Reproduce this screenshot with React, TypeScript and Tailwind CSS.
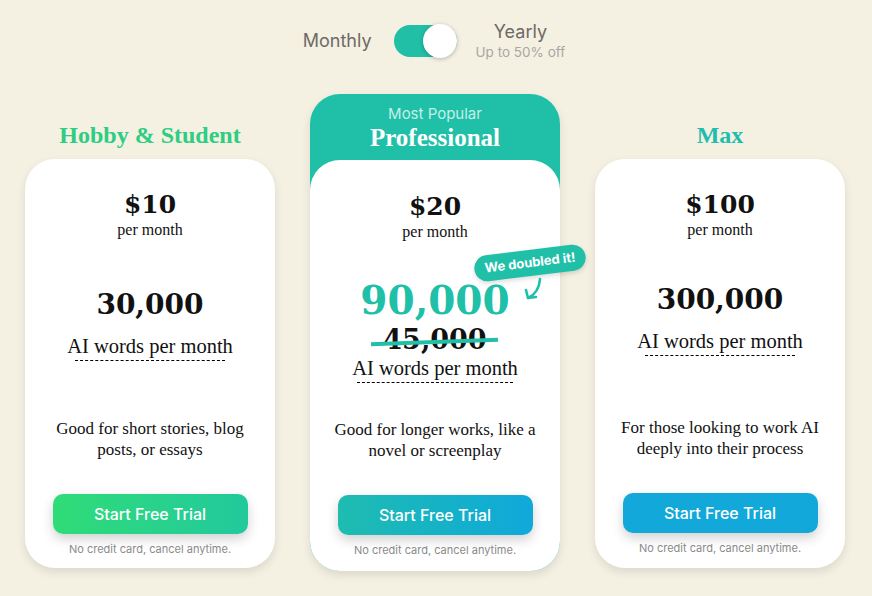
import React from "react";

const serif = "font-['Liberation_Serif',serif]";
const num = "font-['DejaVu_Serif',serif] font-bold";
const sans = "font-['Inter',sans-serif]";

function Price({ price }: { price: string }) {
  return (
    <>
      <div className={`${num} text-[25px] leading-[33px] text-[#111]`}>{price}</div>
      <div className={`${serif} text-[16px] leading-[18px] text-[#111]`}>per month</div>
    </>
  );
}

function Words({ w }: { w: number }) {
  return (
    <div className="flex flex-col items-center">
      <div className={`${serif} text-[20.5px] leading-[24px] text-[#111]`}>AI words per month</div>
      <div className="mt-[2px] border-t border-dashed border-black" style={{ width: w }} />
    </div>
  );
}

function Desc({ children }: { children: React.ReactNode }) {
  return (
    <div className={`${serif} text-[17px] leading-[21px] text-[#111] text-center`}>{children}</div>
  );
}

function Note() {
  return (
    <div className={`${sans} text-[11px] leading-[14px] text-[#8a8a8a] mt-[8px]`}>
      No credit card, cancel anytime.
    </div>
  );
}

function Btn({ cls }: { cls: string }) {
  return (
    <button
      className={`${sans} w-[195px] h-[40px] rounded-[10px] text-white text-[16px] font-medium shadow-[0_5px_12px_rgba(0,0,0,0.18)] ${cls}`}
    >
      Start Free Trial
    </button>
  );
}

export default function App() {
  return (
    <div className="w-[872px] h-[596px] bg-[#f4f0e2] overflow-hidden">
      {/* Toggle row */}
      <div className="pt-[21px] flex items-center justify-center h-[61px] pr-[4px]">
        <div className={`${sans} text-[18px] leading-[22px] text-[#6e6a66] mr-[22px]`}>Monthly</div>
        <div className="relative w-[63px] h-[32px] rounded-full bg-[#20bfa6]">
          <div className="absolute right-0 top-[-1px] w-[34px] h-[34px] rounded-full bg-white shadow-[0_1px_4px_rgba(0,0,0,0.25)]" />
        </div>
        <div className="ml-[19px] flex flex-col items-center">
          <div className={`${sans} text-[18px] leading-[22px] text-[#6e6a66]`}>Yearly</div>
          <div className={`${sans} text-[13.5px] leading-[18px] text-[#aaa7a2]`}>Up to 50% off</div>
        </div>
      </div>

      {/* Cards */}
      <div className="mt-[33px] flex justify-start pl-[25px] gap-[35px]">
        {/* Hobby */}
        <div className="w-[250px] flex flex-col">
          <div className="h-[65px] pt-[27px] flex justify-center">
            <div className={`${serif} font-bold text-[24px] leading-[28px] text-[#2ecd82]`}>Hobby &amp; Student</div>
          </div>
          <div className="h-[409px] bg-white rounded-[30px] shadow-[0_4px_10px_rgba(0,0,0,0.1)] flex flex-col items-center pt-[29px]">
            <Price price="$10" />
            <div className={`${num} text-[28px] leading-[34px] text-[#111] mt-[49px]`}>30,000</div>
            <div className="mt-[12px]">
              <Words w={150} />
            </div>
            <div className="mt-[57px]">
              <Desc>
                Good for short stories, blog
                <br />
                posts, or essays
              </Desc>
            </div>
            <div className="mt-[34px]">
              <Btn cls="bg-gradient-to-r from-[#30dc76] to-[#22c99c]" />
            </div>
            <Note />
          </div>
        </div>

        {/* Professional */}
        <div className="w-[250px] h-[477px] bg-[#20c0a8] rounded-[30px] flex flex-col shadow-[0_4px_10px_rgba(0,0,0,0.1)]">
          <div className="h-[66px] pt-[10px] flex flex-col items-center">
            <div className={`${sans} text-[15px] leading-[20px] text-white/75`}>Most Popular</div>
            <div className={`${serif} font-bold text-[25px] leading-[28px] text-white`}>Professional</div>
          </div>
          <div className="relative h-[411px] bg-white rounded-[30px] flex flex-col items-center pt-[30px]">
            <Price price="$20" />
            <div className={`${num} text-[39px] leading-[44px] text-[#20bfa8] mt-[37px]`}>90,000</div>
            <div className="relative mt-[3px]">
              <div className={`${num} text-[27px] leading-[30px] text-[#111]`}>45,000</div>
              <div className="absolute left-[-12px] right-[-12px] top-[15px] h-[4px] bg-[#20bfa8] rotate-[-2deg]" />
            </div>
            <div className="mt-[1px]">
              <Words w={156} />
            </div>
            <div className="mt-[36px]">
              <Desc>
                Good for longer works, like a
                <br />
                novel or screenplay
              </Desc>
            </div>
            <div className="mt-[34px]">
              <Btn cls="bg-gradient-to-r from-[#1fbcb0] to-[#11a8da]" />
            </div>
            <Note />

            {/* Badge */}
            <div
              className={`${sans} absolute left-[164px] top-[90px] w-[112px] h-[26px] rounded-full bg-[#20bfa8] text-white text-[13px] font-bold flex items-center justify-center rotate-[-7deg] shadow-[0_2px_5px_rgba(0,0,0,0.15)]`}
            >
              We doubled it!
            </div>
            <svg
              className="absolute left-[210px] top-[114px]"
              width="36"
              height="30"
              viewBox="0 0 36 30"
              fill="none"
              stroke="#20bfa8"
              strokeWidth="2.6"
              strokeLinecap="round"
              strokeLinejoin="round"
            >
              <path d="M20 5 Q19 19 8 24" />
              <path d="M6 16 L8 24 L16 23" />
            </svg>
          </div>
        </div>

        {/* Max */}
        <div className="w-[250px] flex flex-col">
          <div className="h-[65px] pt-[27px] flex justify-center">
            <div className={`${serif} font-bold text-[24px] leading-[28px] text-[#1fbdae]`}>Max</div>
          </div>
          <div className="h-[409px] bg-white rounded-[30px] shadow-[0_4px_10px_rgba(0,0,0,0.1)] flex flex-col items-center pt-[29px]">
            <Price price="$100" />
            <div className={`${num} text-[28px] leading-[34px] text-[#111] mt-[44px]`}>300,000</div>
            <div className="mt-[12px]">
              <Words w={150} />
            </div>
            <div className="mt-[61px]">
              <Desc>
                For those looking to work AI
                <br />
                deeply into their process
              </Desc>
            </div>
            <div className="mt-[34px]">
              <Btn cls="bg-[#12a8da]" />
            </div>
            <Note />
          </div>
        </div>
      </div>
    </div>
  );
}
